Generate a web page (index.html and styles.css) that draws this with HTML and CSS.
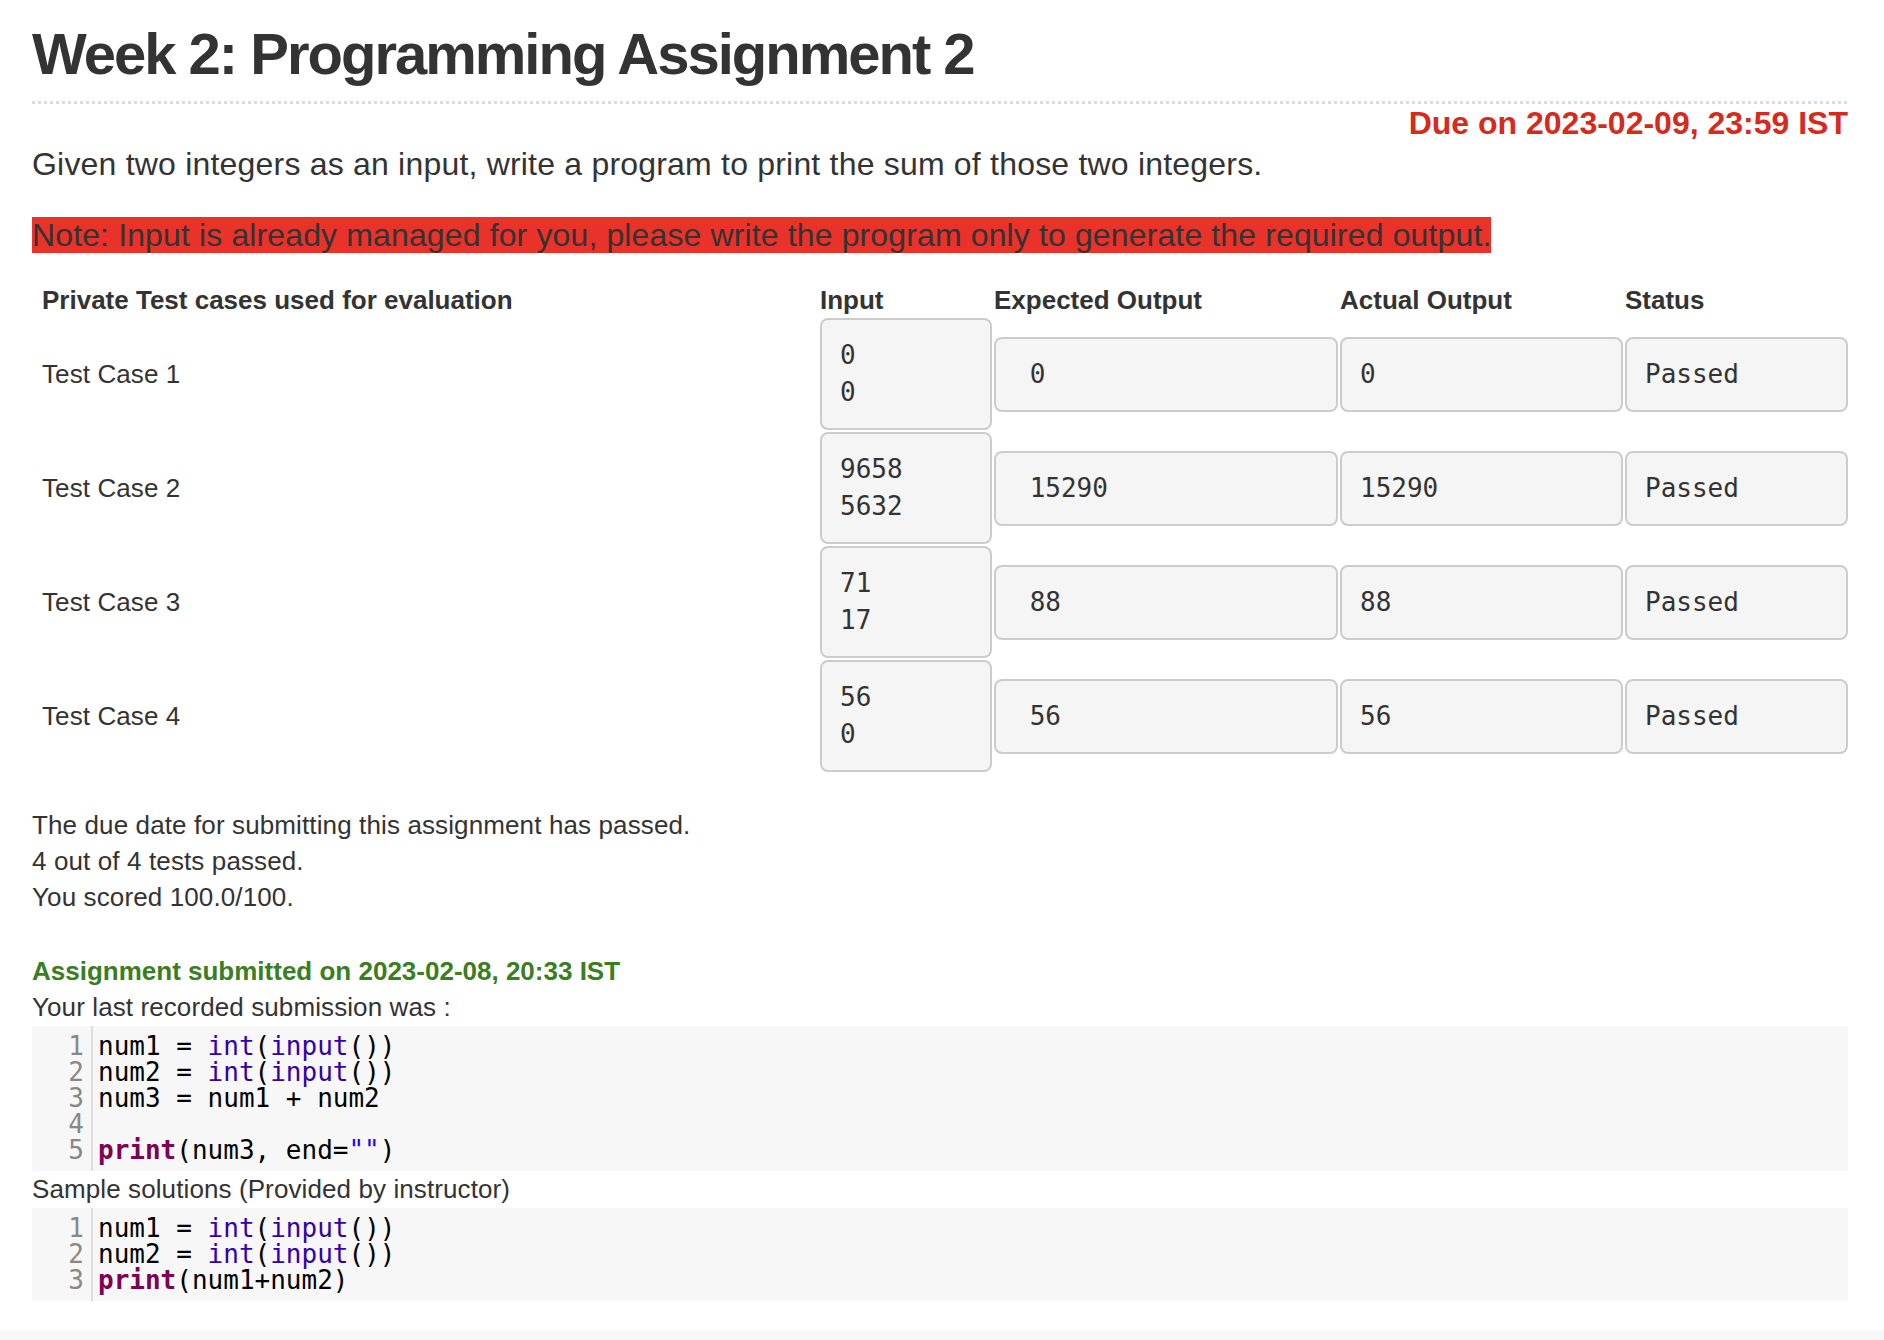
FILE: index.html
```html
<!DOCTYPE html>
<html lang="en">
<head>
<meta charset="utf-8">
<title>Week 2: Programming Assignment 2</title>
<link rel="stylesheet" href="styles.css">
</head>
<body>
<main class="page">
  <h1 class="title">Week 2: Programming Assignment 2</h1>
  <div class="rule"></div>
  <div class="due">Due on 2023-02-09, 23:59 IST</div>
  <p class="desc">Given two integers as an input, write a program to print the sum of those two integers.</p>
  <p class="note"><span class="note-hl">Note: Input is already managed for you, please write the program only to generate the required output.</span></p>

  <div class="tests">
    <div class="th th-label">Private Test cases used for evaluation</div>
    <div class="th">Input</div>
    <div class="th">Expected Output</div>
    <div class="th">Actual Output</div>
    <div class="th">Status</div>

    <div class="td td-label">Test Case 1</div>
    <div class="td"><pre class="box box-input">0
0</pre></div>
    <div class="td"><pre class="box"> 0</pre></div>
    <div class="td"><pre class="box">0</pre></div>
    <div class="td"><pre class="box box-last">Passed</pre></div>

    <div class="td td-label">Test Case 2</div>
    <div class="td"><pre class="box box-input">9658
5632</pre></div>
    <div class="td"><pre class="box"> 15290</pre></div>
    <div class="td"><pre class="box">15290</pre></div>
    <div class="td"><pre class="box box-last">Passed</pre></div>

    <div class="td td-label">Test Case 3</div>
    <div class="td"><pre class="box box-input">71
17</pre></div>
    <div class="td"><pre class="box"> 88</pre></div>
    <div class="td"><pre class="box">88</pre></div>
    <div class="td"><pre class="box box-last">Passed</pre></div>

    <div class="td td-label">Test Case 4</div>
    <div class="td"><pre class="box box-input">56
0</pre></div>
    <div class="td"><pre class="box"> 56</pre></div>
    <div class="td"><pre class="box">56</pre></div>
    <div class="td"><pre class="box box-last">Passed</pre></div>
  </div>

  <div class="result">
    <div>The due date for submitting this assignment has passed.</div>
    <div>4 out of 4 tests passed.</div>
    <div>You scored 100.0/100.</div>
  </div>

  <div class="submitted">Assignment submitted on 2023-02-08, 20:33 IST</div>
  <div class="label">Your last recorded submission was :</div>
  <div class="code">
    <div class="gutter"><div>1</div><div>2</div><div>3</div><div>4</div><div>5</div></div>
    <div class="lines"><div>num1 = <span class="bi">int</span>(<span class="bi">input</span>())</div><div>num2 = <span class="bi">int</span>(<span class="bi">input</span>())</div><div>num3 = num1 + num2</div><div> </div><div><span class="kw">print</span>(num3, end=<span class="str">""</span>)</div></div>
  </div>
  <div class="label">Sample solutions (Provided by instructor)</div>
  <div class="code">
    <div class="gutter"><div>1</div><div>2</div><div>3</div></div>
    <div class="lines"><div>num1 = <span class="bi">int</span>(<span class="bi">input</span>())</div><div>num2 = <span class="bi">int</span>(<span class="bi">input</span>())</div><div><span class="kw">print</span>(num1+num2)</div></div>
  </div>
</main>
</body>
</html>
```

FILE: styles.css
```css
html {
  background: #f8f8f8;
}

html, body {
  margin: 0;
  padding: 0;
}

body {
  font-family: "Liberation Sans", Arial, Helvetica, sans-serif;
  color: #333333;
}

.page {
  background: #ffffff;
  padding: 0 36px 29px 32px;
  overflow: hidden;
}

.title {
  margin: 22px 0 0 0;
  font-size: 58px;
  line-height: 64px;
  font-weight: 700;
  letter-spacing: -2px;
  color: #333333;
}

.rule {
  margin-top: 15px;
  height: 3px;
  background-image: repeating-linear-gradient(90deg, #dddddd 0 3px, transparent 3px 6px);
}

.due {
  margin-top: 1px;
  text-align: right;
  font-size: 32px;
  line-height: 37px;
  font-weight: 700;
  color: #d52b1e;
}

.desc {
  margin: 4px 0 0 0;
  font-size: 32px;
  line-height: 37px;
  letter-spacing: 0.2px;
}

.note {
  margin: 34px 0 0 0;
  font-size: 32px;
  line-height: 37px;
  letter-spacing: 0.13px;
}

.note-hl {
  background: #e8322a;
  color: #333333;
}

.tests {
  margin-top: 28px;
  display: grid;
  grid-template-columns: 788px 174px 346px 285px 1fr;
  font-size: 26px;
  line-height: 36px;
}

.th {
  font-weight: 700;
  height: 36px;
}

.th-label {
  padding-left: 10px;
}

.td {
  display: flex;
  align-items: center;
  padding-bottom: 2px;
}

.td-label {
  padding-left: 10px;
  letter-spacing: 0.1px;
}

.box {
  margin: 0 2px 0 0;
  flex: 1;
  box-sizing: border-box;
  border: 2px solid #cccccc;
  border-radius: 8px;
  background: #f5f5f5;
  padding: 17px 18px;
  font-family: "DejaVu Sans Mono", "Liberation Mono", monospace;
  font-size: 26px;
  line-height: 37px;
  color: #333333;
  white-space: pre;
}

.box-last {
  margin-right: 0;
}

.result {
  margin-top: 33px;
  font-size: 26px;
  line-height: 36px;
  letter-spacing: 0.12px;
}

.submitted {
  margin-top: 38px;
  font-size: 26px;
  line-height: 36px;
  font-weight: 700;
  color: #3a7d22;
}

.label {
  font-size: 26px;
  line-height: 36px;
  letter-spacing: 0.1px;
}

.code {
  display: flex;
  margin-top: 1px;
  background: #f7f7f7;
  font-family: "DejaVu Sans Mono", "Liberation Mono", monospace;
  font-size: 26px;
  line-height: 26px;
  color: #000000;
}

.gutter {
  width: 61px;
  box-sizing: border-box;
  padding: 7px 7px 8px 0;
  border-right: 2px solid #dddddd;
  text-align: right;
  color: #888888;
}

.lines {
  padding: 7px 0 8px 5px;
  white-space: pre;
}

.bi {
  color: #3300aa;
}

.kw {
  color: #7f0055;
  font-weight: 700;
}

.str {
  color: #2a00ff;
}
```
